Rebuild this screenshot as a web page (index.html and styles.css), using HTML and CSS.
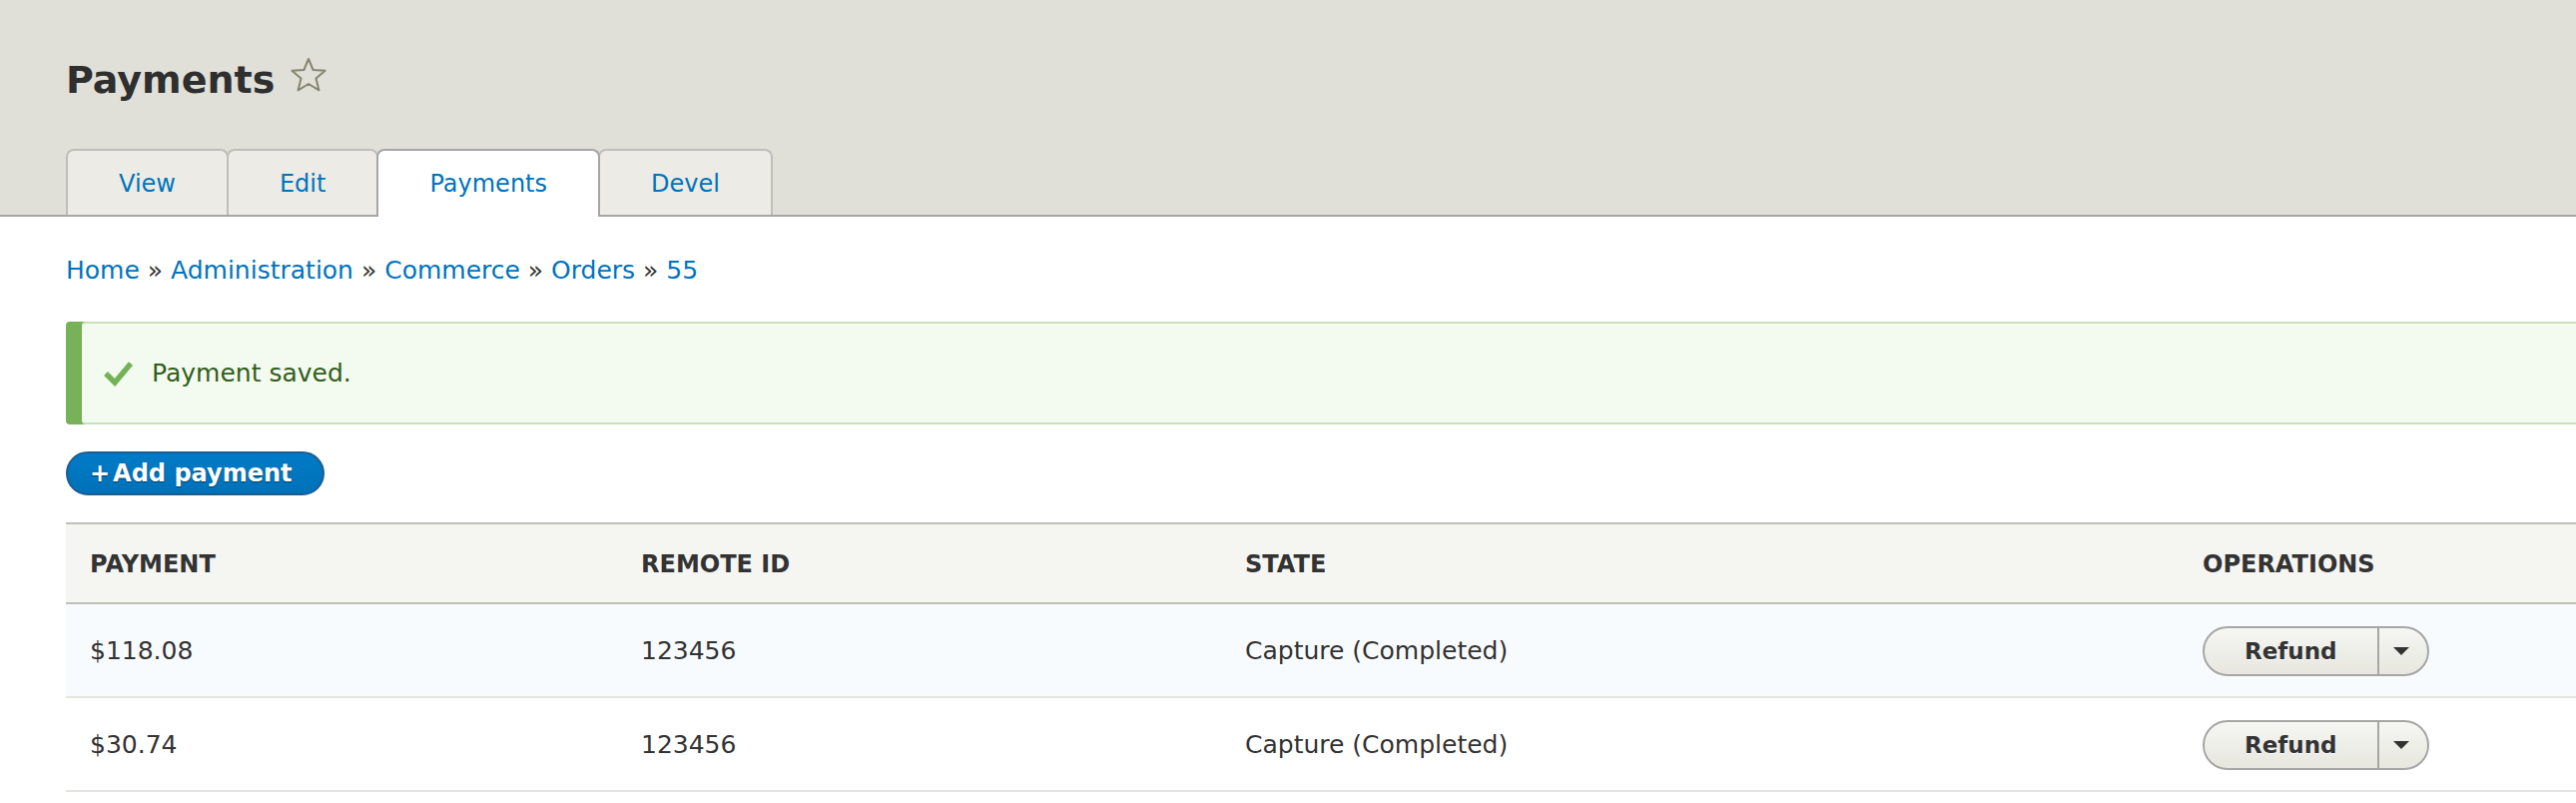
FILE: index.html
```html
<!DOCTYPE html>
<html lang="en">
<head>
<meta charset="utf-8">
<title>Payments</title>
<link rel="stylesheet" href="styles.css">
</head>
<body>
<header class="page-header">
  <div class="title-row">
    <h1 class="page-title">Payments</h1>
    <svg class="star" width="38" height="38" viewBox="0 0 38 38" aria-hidden="true">
      <polygon points="18,2 22.6,13 34.6,13.8 25.5,21.6 28.4,33.3 18,27 7.6,33.3 10.5,21.6 1.4,13.8 13.4,13" fill="none" stroke="#85856f" stroke-width="2" stroke-linejoin="round"/>
    </svg>
  </div>
  <nav class="tabs">
    <a class="tab" href="#">View</a>
    <a class="tab" href="#">Edit</a>
    <a class="tab tab-active" href="#">Payments</a>
    <a class="tab" href="#">Devel</a>
  </nav>
</header>
<main class="content">
  <nav class="breadcrumb">
    <a href="#">Home</a> » <a href="#">Administration</a> » <a href="#">Commerce</a> » <a href="#">Orders</a> » <a href="#">55</a>
  </nav>
  <div class="message">
    <svg class="check" width="31" height="26" viewBox="0 0 31 26" aria-hidden="true">
      <path d="M3 13 L12 22 L28 3" fill="none" stroke="#73b355" stroke-width="5.5" stroke-linejoin="miter"/>
    </svg>
    <span>Payment saved.</span>
  </div>
  <div class="actions">
    <a class="button-action" href="#"><span class="plus">+</span>Add payment</a>
  </div>
  <table class="payments">
    <colgroup>
      <col class="col-payment">
      <col class="col-remote">
      <col class="col-state">
      <col class="col-ops">
    </colgroup>
    <thead>
      <tr><th>Payment</th><th>Remote ID</th><th>State</th><th>Operations</th></tr>
    </thead>
    <tbody>
      <tr class="row-hl">
        <td>$118.08</td><td>123456</td><td>Capture (Completed)</td>
        <td><span class="dropbutton"><a class="drop-main" href="#">Refund</a><span class="drop-toggle"><span class="arrow"></span></span></span></td>
      </tr>
      <tr>
        <td>$30.74</td><td>123456</td><td>Capture (Completed)</td>
        <td><span class="dropbutton"><a class="drop-main" href="#">Refund</a><span class="drop-toggle"><span class="arrow"></span></span></span></td>
      </tr>
    </tbody>
  </table>
</main>
</body>
</html>
```
FILE: styles.css
```css
html, body {
  margin: 0;
  padding: 0;
}
body {
  font-family: "DejaVu Sans", "Liberation Sans", sans-serif;
  font-size: 25px;
  color: #333;
  background: #fff;
  overflow: hidden;
}
a {
  color: #0074bd;
  text-decoration: none;
}

/* Header */
.page-header {
  background: #e0e0d8;
  padding: 54px 0 0 66px;
  border-bottom: 2px solid #a6a6a6;
}
.title-row {
  display: flex;
  align-items: flex-start;
}
.page-title {
  margin: 0;
  font-size: 38px;
  line-height: 52px;
  font-weight: bold;
  color: #2f2f2f;
}
.star {
  margin-left: 16px;
  margin-top: 3px;
}
.tabs {
  display: flex;
  align-items: flex-start;
  margin-top: 43px;
  margin-bottom: -2px;
}
.tab {
  box-sizing: border-box;
  height: 66px;
  padding: 18px 51px 0;
  font-size: 24px;
  line-height: 30px;
  background: #ecebe6;
  border: 2px solid #bfbfba;
  border-bottom: 0;
  border-radius: 8px 8px 0 0;
  margin-left: -2px;
}
.tab:first-child {
  margin-left: 0;
}
.tab-active {
  height: 68px;
  background: #fff;
  border-color: #a6a6a6;
  position: relative;
  z-index: 1;
}

/* Content */
.content {
  padding-left: 66px;
  margin-right: -40px;
}
.breadcrumb {
  margin-top: 35px;
  line-height: 38px;
  font-size: 25px;
  color: #333;
}
.message {
  margin-top: 32px;
  margin-left: 16px;
  display: flex;
  align-items: center;
  padding: 30px 40px 29px 21px;
  line-height: 40px;
  background: #f3faef;
  border: 2px solid #c9e1bd;
  border-left: 0;
  border-radius: 4px;
  box-shadow: -16px 0 0 #77b259;
  color: #325e1c;
}
.check {
  margin-right: 18px;
  flex: none;
}
.actions {
  margin-top: 27px;
  height: 44px;
}
.button-action {
  display: inline-block;
  box-sizing: border-box;
  height: 44px;
  padding: 0 30px 0 22px;
  line-height: 40px;
  font-size: 24px;
  font-weight: bold;
  color: #fff;
  background: linear-gradient(to bottom, #007bc6, #0071b8);
  border: 2px solid #1e5c90;
  border-radius: 22px;
  text-shadow: 0 1px 1px rgba(0, 0, 0, 0.5);
}
.plus {
  margin-right: 3px;
}

/* Table */
.payments {
  margin-top: 27px;
  width: 100%;
  table-layout: fixed;
  border-collapse: separate;
  border-spacing: 0;
}
.col-payment { width: 552px; }
.col-remote { width: 605px; }
.col-state { width: 959px; }
.payments th {
  text-align: left;
  font-size: 24px;
  font-weight: bold;
  text-transform: uppercase;
  line-height: 30px;
  padding: 25px 24px 23px;
  background: #f5f5f2;
  border-top: 2px solid #bfbfba;
  border-bottom: 2px solid #bfbfba;
  color: #333;
}
.payments td {
  padding: 22px 24px 20px;
  line-height: 32px;
  vertical-align: middle;
  border-bottom: 2px solid #e6e4df;
  white-space: nowrap;
}
.row-hl td {
  background: #f7fbfe;
}
.dropbutton {
  display: inline-flex;
  box-sizing: border-box;
  height: 50px;
  border: 2px solid #a6a6a6;
  border-radius: 25px;
  background: linear-gradient(to bottom, #f6f6f3, #e7e7df);
  vertical-align: middle;
  overflow: hidden;
}
.drop-main {
  padding: 0 40px;
  line-height: 46px;
  font-size: 23px;
  font-weight: bold;
  color: #333;
  text-shadow: 0 1px #fff;
}
.drop-toggle {
  width: 48px;
  border-left: 2px solid #a6a6a6;
  display: flex;
  align-items: center;
  justify-content: center;
}
.arrow {
  width: 0;
  height: 0;
  border-left: 8px solid transparent;
  border-right: 8px solid transparent;
  border-top: 8px solid #333;
  margin-right: 4px;
}
```
